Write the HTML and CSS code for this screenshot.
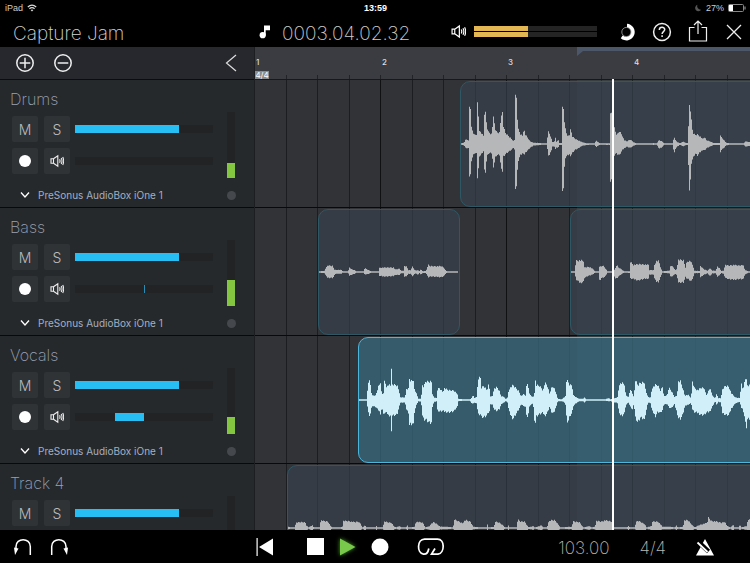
FILE: index.html
```html
<!DOCTYPE html>
<html lang="en">
<head>
  <meta charset="UTF-8">
  <meta name="viewport" content="width=device-width, initial-scale=1.0">
  <title>Capture Jam</title>
  <link rel="stylesheet" href="styles.css">
</head>
<body>
  <!-- shared icons -->
  <svg class="defs" aria-hidden="true">
    <symbol id="speaker" viewBox="0 0 14 14">
      <path d="M1 4.800h2.500v4.400H1zM3.500 4.800L7.800 1.800v10.400L3.500 9.200M9.600 5.200q.9 1.800 0 3.600M11.200 4q1.600 3 0 6M12.700 3q2 4 0 8" fill="none" stroke="currentColor" stroke-width="1.100"/>
    </symbol>
    <symbol id="chevron" viewBox="0 0 10 6">
      <path d="M1 .5l4 4.500 4-4.500" fill="none" stroke="currentColor" stroke-width="1.300"/>
    </symbol>
  </svg>

  <div class="status">
    <div class="status-left">
      <span>iPad</span>
      <svg width="10" height="8" viewBox="0 0 10 8"><path d="M.8 3q4.200-3.600 8.400 0M2.400 4.800q2.600-2.200 5.200 0" fill="none" stroke="#ddd" stroke-width="1.200"/><path d="M3.600 6q1.400-1.100 2.800 0L5 7.600z" fill="#ddd"/></svg>
    </div>
    <div class="clock">13:59</div>
    <div class="status-right">
      <svg width="7" height="8" viewBox="0 0 7 8"><path d="M2.500.8a3.300 3.300 0 1 0 3.700 5A3.600 3.600 0 0 1 2.500.8z" fill="#555"/></svg>
      <span>27%</span>
      <svg width="18" height="8" viewBox="0 0 18 8"><rect x=".5" y=".5" width="15" height="7" rx="1" fill="none" stroke="#888"/><path d="M1 1h4v6H1z" fill="#fff"/><path d="M16.500 2.500h1v3h-1z" fill="#aaa"/></svg>
    </div>
  </div>

  <header class="header">
    <h1 class="song">Capture Jam</h1>
    <svg class="note" width="12" height="14" viewBox="0 0 12 14"><path d="M5 .5h6v4.800H6.700v5H5z" fill="#fff"/><circle cx="3.700" cy="10.200" r="3.100" fill="#fff"/></svg>
    <div class="position">0003.04.02.32</div>
    <svg class="master-icon" width="15" height="15"><use href="#speaker"/></svg>
    <div class="master">
      <div class="master-bar"></div>
      <div class="master-bar"></div>
    </div>
    <div class="actions">
      <button aria-label="CPU load"><svg width="18" height="18" viewBox="0 0 18 18"><path d="M9 .8a8.300 8.300 0 1 1-6.200 14.400L4.600 12.400A4.600 4.600 0 1 0 9 4.500z" fill="#fff"/><circle cx="8.400" cy="9" r="4.600" fill="#000" stroke="#aaa" stroke-width=".8"/></svg></button>
      <button aria-label="Help"><svg width="20" height="20" viewBox="0 0 20 20" fill="none" stroke="#eee" stroke-width="1.500"><circle cx="10" cy="10" r="8.400"/><path d="M7.300 7.900c.1-3.500 5.400-3.400 5.400-.3 0 2-2.600 2.100-2.600 4.400M10.100 13.300v1.700"/></svg></button>
      <button aria-label="Share"><svg width="20" height="24" viewBox="0 0 20 24" fill="none" stroke="#eee" stroke-width="1.200"><path d="M6.500 7.500h-5V21h17V7.500h-5M10 14V1M6 5l4-4 4 4"/></svg></button>
      <button aria-label="Close"><svg width="20" height="20" viewBox="0 0 20 20"><path d="M3 3l14 14M17 3L3 17" stroke="#eee" stroke-width="1.300"/></svg></button>
    </div>
  </header>

  <main class="workspace">
    <section class="sidebar">
      <div class="track-tools">
        <button aria-label="Add track"><svg width="20" height="20" viewBox="0 0 20 20" fill="none" stroke="#eee" stroke-width="1.500"><circle cx="10" cy="10" r="8.200"/><path d="M10 4.700v10.600M4.700 10h10.600"/></svg></button>
        <button aria-label="Remove track"><svg width="20" height="20" viewBox="0 0 20 20" fill="none" stroke="#eee" stroke-width="1.500"><circle cx="10" cy="10" r="8.200"/><path d="M4.700 10h10.600"/></svg></button>
        <button class="collapse" aria-label="Collapse"><svg width="12" height="18" viewBox="0 0 12 18"><path d="M11 1L1.500 9l9.500 8" fill="none" stroke="#ddd" stroke-width="1.200"/></svg></button>
      </div>

      <div class="track">
        <h2>Drums</h2>
        <div class="controls">
          <button class="key">M</button>
          <button class="key">S</button>
          <input class="volume" type="range" value="75" aria-label="Drums volume">
          <button class="key" aria-label="Record"><span class="rec"></span></button>
          <button class="key" aria-label="Monitor"><svg width="14" height="14"><use href="#speaker"/></svg></button>
          <input class="pan" type="range" value="50" aria-label="Drums pan">
          <div class="level"><div style="height: 23%"></div></div>
        </div>
        <div class="device">
          <svg width="10" height="6"><use href="#chevron"/></svg>
          <span>PreSonus AudioBox iOne 1</span>
          <i class="led"></i>
        </div>
      </div>

      <div class="track">
        <h2>Bass</h2>
        <div class="controls">
          <button class="key">M</button>
          <button class="key">S</button>
          <input class="volume" type="range" value="75" aria-label="Bass volume">
          <button class="key" aria-label="Record"><span class="rec"></span></button>
          <button class="key" aria-label="Monitor"><svg width="14" height="14"><use href="#speaker"/></svg></button>
          <input class="pan pan-center" type="range" value="50" aria-label="Bass pan">
          <div class="level"><div style="height: 39%"></div></div>
        </div>
        <div class="device">
          <svg width="10" height="6"><use href="#chevron"/></svg>
          <span>PreSonus AudioBox iOne 1</span>
          <i class="led"></i>
        </div>
      </div>

      <div class="track">
        <h2>Vocals</h2>
        <div class="controls">
          <button class="key">M</button>
          <button class="key">S</button>
          <input class="volume" type="range" value="75" aria-label="Vocals volume">
          <button class="key" aria-label="Record"><span class="rec"></span></button>
          <button class="key" aria-label="Monitor"><svg width="14" height="14"><use href="#speaker"/></svg></button>
          <input class="pan pan-left" type="range" value="29" aria-label="Vocals pan">
          <div class="level"><div style="height: 26%"></div></div>
        </div>
        <div class="device">
          <svg width="10" height="6"><use href="#chevron"/></svg>
          <span>PreSonus AudioBox iOne 1</span>
          <i class="led"></i>
        </div>
      </div>

      <div class="track">
        <h2>Track 4</h2>
        <div class="controls">
          <button class="key">M</button>
          <button class="key">S</button>
          <input class="volume" type="range" value="75" aria-label="Track 4 volume">
          <div class="level"></div>
        </div>
      </div>
    </section>

    <section class="timeline">
      <div class="ruler">
        <span>1</span><span>2</span><span>3</span><span>4</span>
        <div class="signature">4/4</div>
        <div class="loop-range"></div>
      </div>
      <div class="lane"><div class="clip clip-drums"><svg class="wave" data-wave="drums"></svg></div></div>
      <div class="lane">
        <div class="clip clip-bass-a"><svg class="wave" data-wave="bassA"></svg></div>
        <div class="clip clip-bass-b"><svg class="wave" data-wave="bassB"></svg></div>
      </div>
      <div class="lane"><div class="clip clip-vocals selected"><svg class="wave" data-wave="vocals"></svg></div></div>
      <div class="lane"><div class="clip clip-track4"><svg class="wave" data-wave="track4"></svg></div></div>
      <div class="loop-shade"></div>
      <div class="playhead"></div>
    </section>
  </main>

  <footer class="transport">
    <div class="history">
      <button aria-label="Undo"><svg width="20" height="18" viewBox="0 0 20 18"><path d="M17.300 17V8.500c0-9-14.300-9-14.300 0V12" fill="none" stroke="#fff" stroke-width="1.500"/><path d="M1 9.500l4.500 1L2 17z" fill="#fff"/></svg></button>
      <button aria-label="Redo"><svg width="20" height="18" viewBox="0 0 20 18"><path d="M2.700 17V8.500c0-9 14.300-9 14.300 0V12" fill="none" stroke="#fff" stroke-width="1.500"/><path d="M19 9.500l-4.500 1L18 17z" fill="#fff"/></svg></button>
    </div>
    <div class="play-keys">
      <button class="rewind" aria-label="Back to start"><svg width="18" height="18" viewBox="0 0 18 18" fill="#fff"><path d="M.5 0h1.200v18H.5zM3 9l14-8.500v17z"/></svg></button>
      <button class="stop" aria-label="Stop"><svg width="17" height="17"><path d="M0 0h17v17H0z" fill="#fff"/></svg></button>
      <button class="play" aria-label="Play"><svg width="16" height="18" viewBox="0 0 16 18"><path d="M0 .5L15.500 9 0 17.500z" fill="#77c84b"/></svg></button>
      <button class="record" aria-label="Record"><svg width="18" height="18"><circle cx="9" cy="9" r="8.500" fill="#fff"/></svg></button>
      <button class="loop" aria-label="Loop"><svg width="28" height="18" viewBox="0 0 28 18" fill="none" stroke="#fff" stroke-width="1.700"><path d="M7.500 16.200h-1C-.5 15 0 1.200 7.500 1.200h13c7.500 0 7.500 13.500.5 15h-6.500L18 10.500M7 16.200c3 0 4.200-2 4.800-5.700"/></svg></button>
    </div>
    <div class="tempo">103.00</div>
    <div class="meter">4/4</div>
    <button class="metronome" aria-label="Metronome"><svg width="20" height="18" viewBox="0 0 20 18"><path d="M10 1l9 16.500H1z" fill="#fff"/><path d="M4 4.500L13.500 13.500" stroke="#000" stroke-width="4.500"/><path d="M2.500 4.500L12.500 14" stroke="#fff" stroke-width="1.800"/></svg></button>
  </footer>

  <script src="waves.js"></script>
</body>
</html>
```
FILE: styles.css
```css
* {
  box-sizing: border-box;
}

body {
  margin: 0;
  height: 100vh;
  display: flex;
  flex-direction: column;
  overflow: hidden;
  background: #000;
  color: #ccc;
  font-family: Inter, "Liberation Sans", sans-serif;
}

button {
  display: flex;
  align-items: center;
  justify-content: center;
  padding: 0;
  border: none;
  background: none;
  color: inherit;
  font: inherit;
  cursor: pointer;
}

h1, h2 {
  margin: 0;
  font-weight: 200;
}

.defs {
  display: none;
}

/* iPad status bar */
.status {
  display: grid;
  grid-template-columns: 1fr auto 1fr;
  align-items: center;
  height: 16px;
  padding: 0 4px 0 5px;
  font-family: "Liberation Sans", sans-serif;
  font-size: 9px;
}

.status-left,
.status-right {
  display: flex;
  align-items: center;
  gap: 4px;
}

.status-right {
  justify-content: flex-end;
}

.clock {
  color: #fff;
  font-weight: bold;
}

/* header */
.header {
  display: flex;
  align-items: center;
  flex: none;
  height: 31px;
  padding: 0 6px 0 13px;
}

.song {
  flex: none;
  width: 246px;
  padding-top: 4px;
  font-size: 19px;
  color: #d4d4d4;
}

.position {
  flex: none;
  width: 180px;
  padding: 4px 0 0 11px;
  font-size: 19px;
  font-weight: 200;
}

.note,
.master-icon,
.master {
  flex: none;
}

.master-icon {
  color: #fff;
}

.master {
  display: flex;
  flex-direction: column;
  gap: 1px;
  width: 123px;
  margin-left: 8px;
}

.master-bar {
  height: 5px;
  background: linear-gradient(to right, #e3b854 44%, #242424 44%);
}

.actions {
  display: flex;
  align-items: center;
  justify-content: flex-end;
  flex: 1;
  gap: 16px;
}

/* workspace */
.workspace {
  display: flex;
  flex: 1;
  min-height: 0;
  overflow: hidden;
}

.sidebar {
  flex: none;
  width: 255px;
  background: #26292c;
  border-right: 1px solid #1c1e21;
}

.track-tools {
  display: flex;
  align-items: center;
  gap: 18px;
  height: 33px;
  padding: 0 17px 0 15px;
  background: #27282d;
  border-bottom: 1px solid #0c0c0e;
}

.collapse {
  margin-left: auto;
}

.track {
  height: 128px;
  padding: 7px 18px 0 10px;
  border-bottom: 1px solid #08090a;
}

.track h2 {
  font-size: 16px;
  line-height: 24px;
  color: #9ba1b0;
}

.controls {
  display: grid;
  grid-template-columns: 26px 26px 138px 8px;
  grid-template-rows: 26px 26px;
  align-items: center;
  gap: 6px;
  padding: 5px 0 0 2px;
}

.key {
  width: 26px;
  height: 26px;
  border-radius: 2px;
  background: #303336;
  font-size: 14px;
  font-weight: 300;
  color: #b9bbbe;
}

.key svg {
  color: #eee;
}

.rec {
  width: 12px;
  height: 12px;
  border-radius: 50%;
  background: #fff;
}

input[type="range"] {
  appearance: none;
  width: 138px;
  height: 8px;
  margin: 0 0 0 -1px;
  background: #222325;
}

input[type="range"]::-webkit-slider-thumb {
  appearance: none;
  width: 8px;
  height: 8px;
}

input.volume {
  background: linear-gradient(to right, #27bef4 104px, #222325 104px);
}

input.pan-center {
  background: linear-gradient(to right, #222325 69px, #2b8db5 69px, #2b8db5 70px, #222325 70px);
}

input.pan-left {
  background: linear-gradient(to right, #222325 40px, #27bef4 40px, #27bef4 69px, #222325 69px);
}

.level {
  grid-column: 4;
  grid-row: 1 / 3;
  display: flex;
  align-items: flex-end;
  width: 8px;
  height: 66px;
  margin-left: 7px;
  background: #222325;
}

.level div {
  width: 8px;
  background: #84c63f;
}

.device {
  display: flex;
  align-items: center;
  height: 26px;
  padding: 0 0 0 10px;
  margin-top: 8px;
  font-size: 10px;
  color: #a3b0c4;
}

.device svg {
  margin-right: 8px;
  color: #fff;
}

.led {
  width: 9px;
  height: 9px;
  margin-left: auto;
  border-radius: 50%;
  background: #45484d;
}

/* timeline */
.timeline {
  position: relative;
  flex: 1;
  min-width: 0;
  overflow: hidden;
  background: #323337;
}

.ruler {
  position: relative;
  display: flex;
  height: 33px;
  border-bottom: 1px solid #17181a;
  background:
    repeating-linear-gradient(to right, transparent 0 31px, #222326 31px 32px, transparent 32px 62px, #222326 62px 63px) 0 100% / 100% 4px no-repeat,
    #3a3c41;
}

.ruler span {
  flex: none;
  width: 126px;
  padding: 10px 0 0 1px;
  font-size: 8px;
  font-weight: 500;
  color: #ddd;
}

.signature {
  position: absolute;
  left: 0;
  bottom: 0;
  width: 14px;
  background: #8a8b8d;
  color: #fff;
  font-size: 8px;
  line-height: 8px;
  text-align: center;
}

.loop-range {
  position: absolute;
  left: 322px;
  right: 0;
  top: 0;
  height: 9px;
  background: #4c586a;
  clip-path: polygon(0 0, 100% 0, 100% 4px, 6px 4px, 0 9px);
}

.lane {
  position: relative;
  height: 128px;
  border-bottom: 1px solid #08090a;
  background:
    repeating-linear-gradient(to right, transparent 0 125px, #101113 125px 126px),
    repeating-linear-gradient(to right, transparent 0 31px, #1c1d20 31px 32px, transparent 32px 62px, #1c1d20 62px 63px);
}

.clip {
  position: absolute;
  z-index: 1;
  top: 1px;
  height: 126px;
  overflow: hidden;
  border: 1px solid #2e5866;
  border-radius: 10px;
  background: rgba(57, 66, 80, .64);
  color: #b6b7b9;
}

.clip.selected {
  border-color: #4bb5dc;
  background: rgba(55, 102, 121, .8);
  color: #d0eff8;
}

.clip-drums { left: 205px; right: -12px; }
.clip-bass-a { left: 63px; width: 142px; }
.clip-bass-b { left: 315px; right: -12px; }
.clip-vocals { left: 103px; right: -12px; }
.clip-track4 { left: 32px; right: -12px; }

.wave {
  display: block;
  width: 100%;
  height: 100%;
}

/* sits under the clips */
.loop-shade {
  position: absolute;
  left: 322px;
  right: 0;
  top: 33px;
  bottom: 0;
  background: rgba(80, 120, 110, .18);
}

.playhead {
  position: absolute;
  z-index: 2;
  left: 357px;
  top: 32px;
  bottom: 0;
  width: 2px;
  background: #fff;
}

/* transport */
.transport {
  display: flex;
  align-items: center;
  flex: none;
  height: 33px;
  padding-right: 35px;
}

.history {
  display: flex;
  gap: 16px;
  width: 256px;
  padding-left: 13px;
}

.play-keys {
  display: flex;
  align-items: center;
}

.stop {
  margin-left: 33px;
}

.play {
  margin-left: 16px;
  filter: drop-shadow(0 0 2px #4c9a2c);
}

.record {
  margin-left: 15px;
}

.loop {
  margin-left: 28px;
}

.tempo {
  margin-left: auto;
  margin-right: 30px;
}

.tempo,
.meter {
  padding-top: 3px;
  font-size: 17px;
  font-weight: 200;
  color: #b8b8b8;
}

.metronome {
  margin-left: 29px;
}
```
FILE: waves.js
```js
// Envelope points: position, height above the axis, height below (3 units = 1px)
const WAVES = {
  drums: `3 2 2, 12 4 4, 16 14 12, 25 12 14, 27 40 30, 28 113 98, 32 113 98, 34 50 50, 42 28 28, 49 30 30, 50 125 100, 54 124 104, 56 50 50, 60 38 36, 70 25 22, 73 96 84, 77 94 84, 80 55 40, 85 38 30, 96 30 28, 98 80 68, 102 78 68, 104 50 45, 110 36 34, 120 36 34, 122 97 84, 127 97 84, 130 55 38, 135 35 32, 145 25 24, 155 15 18, 160 10 12, 164 14 20, 166 142 130, 169 142 130, 172 80 85, 175 45 50, 180 32 36, 188 25 28, 191 50 36, 195 30 28, 202 20 20, 210 8 12, 220 4 5, 240 3 3, 245 1 2, 261 2 2, 263 40 30, 267 34 36, 272 22 25, 277 6 8, 283 8 8, 286 20 16, 289 8 12, 295 12 10, 298 3 3, 305 3 3, 307 109 138, 311 109 138, 314 55 45, 320 30 38, 327 24 32, 332 47 36, 336 24 28, 345 16 18, 355 11 14, 365 6 6, 380 2 3, 404 2 2, 408 11 10, 416 4 4, 425 2 2, 448 2 3, 451 98 120, 456 112 120, 460 60 40, 465 40 30, 470 28 30, 478 40 35, 486 28 20, 492 12 14, 500 8 8, 510 14 12, 520 6 6, 530 2 2, 570 2 2, 580 3 3, 590 2 2, 597 12 14, 606 8 10, 612 2 2, 638 2 2, 642 24 32, 646 12 15, 652 6 8, 660 2 2, 668 7 7, 680 3 3, 684 3 3, 686 118 140, 690 118 142, 693 80 60, 698 35 45, 705 28 30, 712 30 36, 720 24 26, 728 15 18, 734 22 20, 738 12 14, 750 8 8, 760 3 3, 778 3 3, 782 35 34, 785 18 14, 790 14 14, 798 4 4, 815 1 2, 850 1 1, 856 8 8, 875 5 5`,
  bassA: `4 2 2, 20 4 4, 24 16 14, 29 20 18, 44 19 18, 48 8 14, 50 7 6, 70 6 5, 74 2 2, 90 2 2, 93 14 12, 101 8 8, 111 5 5, 114 2 2, 136 2 2, 140 12 8, 151 6 6, 161 2 2, 182 2 2, 184 13 12, 196 14 14, 226 14 13, 231 8 9, 244 10 9, 249 4 4, 256 4 4, 259 18 14, 264 18 13, 271 6 6, 278 5 5, 282 18 14, 286 12 10, 291 5 4, 300 5 8, 304 3 3, 308 8 8, 314 2 3, 324 4 4, 330 22 16, 336 18 14, 356 18 15, 371 18 16, 378 12 12, 384 3 3, 390 2 2, 420 1 1`,
  bassB: `5 1 1, 13 2 2, 18 36 24, 30 36 34, 40 34 30, 43 14 18, 55 16 12, 62 14 10, 70 8 6, 75 2 2, 86 2 2, 89 24 36, 93 16 18, 98 20 18, 105 12 14, 112 2 2, 130 2 2, 135 10 20, 140 22 20, 145 14 14, 155 8 6, 162 2 2, 178 2 3, 181 32 20, 190 22 22, 205 24 26, 220 24 22, 235 22 20, 238 6 8, 250 6 8, 253 22 20, 258 34 30, 266 34 30, 272 12 14, 276 2 2, 298 4 4, 302 22 16, 310 14 10, 316 6 6, 320 10 10, 324 38 32, 340 36 32, 346 14 16, 350 32 20, 356 34 24, 361 34 28, 368 20 20, 373 4 4, 388 3 3, 391 18 16, 402 8 8, 412 4 4, 420 12 14, 426 4 4, 438 4 4, 441 18 16, 448 12 10, 454 3 3, 460 4 6, 466 22 18, 475 20 22, 490 22 24, 505 20 22, 520 22 22, 524 6 8, 535 2 2, 545 2 2`,
  vocals: `3 1 1, 26 1 1, 28 28 20, 31 56 40, 34 57 46, 38 42 40, 41 14 18, 53 14 22, 57 30 28, 63 50 34, 67 48 42, 71 20 26, 76 20 40, 77 60 40, 81 60 44, 85 38 36, 90 50 50, 97 46 50, 98 90 90, 101 90 90, 102 48 48, 117 46 46, 123 28 22, 127 8 8, 141 8 8, 145 34 30, 151 36 40, 153 68 80, 159 60 76, 165 62 76, 169 34 40, 175 20 14, 181 4 4, 189 4 5, 192 46 44, 197 40 60, 203 58 60, 209 56 66, 215 58 72, 221 56 70, 223 20 24, 227 8 6, 235 6 4, 237 30 30, 243 38 36, 253 26 34, 259 36 36, 272 30 38, 287 30 36, 297 20 22, 301 4 4, 317 2 2, 335 2 2, 339 4 8, 345 16 12, 349 6 8, 357 12 12, 359 66 44, 367 68 44, 370 38 52, 377 44 54, 387 30 48, 390 50 40, 394 36 36, 396 10 12, 405 14 16, 407 36 30, 417 40 34, 425 26 28, 429 10 12, 435 12 10, 443 3 3, 449 8 8, 452 34 34, 459 40 50, 465 46 58, 472 38 46, 482 28 30, 489 12 14, 497 18 18, 502 14 22, 506 50 50, 510 50 56, 513 20 20, 525 8 10, 529 20 60, 532 60 70, 535 46 50, 545 44 44, 555 30 40, 560 52 50, 567 46 40, 574 20 22, 581 40 40, 587 42 42, 594 20 20, 599 4 4, 611 2 4, 617 8 6, 622 12 14, 625 58 50, 629 58 70, 635 46 50, 642 46 40, 645 16 20, 652 10 12, 662 4 4, 675 4 4, 680 8 8, 684 1 2, 737 1 2, 752 6 4, 757 2 3, 772 6 8, 780 10 10, 782 50 44, 792 52 48, 799 48 40, 803 14 16, 811 10 8, 817 34 22, 823 20 30, 827 8 10, 832 62 54, 839 46 70, 847 54 56, 857 56 60, 863 30 44, 869 10 8, 877 8 10, 882 38 34, 892 46 50, 899 46 36, 907 30 40, 914 42 30, 917 12 14, 927 14 12, 932 38 22, 939 30 26, 949 10 14, 957 14 40, 961 58 56, 967 58 58, 974 36 46, 980 14 20, 990 16 14, 999 6 10, 1003 58 30, 1009 38 38, 1019 30 40, 1029 38 46, 1039 36 46, 1044 14 40, 1055 36 36, 1065 10 16, 1071 6 4, 1076 20 16, 1080 6 6, 1089 6 8, 1092 32 40, 1102 44 46, 1112 42 48, 1120 20 26, 1132 8 10, 1144 6 6, 1150 50 24, 1155 30 30, 1161 68 60, 1164 68 94, 1167 46 60, 1180 46 58`,
  track4: `3 2 2, 5 6 6, 9 1 1, 23 2 2, 26 16 9, 40 18 9, 54 18 9, 58 8 8, 64 2 2, 76 8 8, 80 1 1, 98 2 2, 101 24 9, 110 22 9, 123 20 9, 128 10 9, 134 2 2, 158 2 2, 166 4 4, 168 22 9, 183 22 9, 203 18 9, 213 20 9, 220 14 9, 226 2 2, 234 8 8, 238 2 2, 265 1 1, 268 6 6, 272 1 1, 288 3 3, 290 20 9, 300 18 9, 313 16 9, 320 6 6, 326 2 2, 338 6 6, 343 1 1, 357 1 1, 360 10 9, 364 1 1, 383 4 4, 386 20 9, 398 18 9, 408 16 9, 414 2 2, 428 6 6, 433 14 9, 440 18 9, 450 12 9, 460 4 4, 480 4 4, 498 2 2, 502 26 9, 512 22 9, 528 14 9, 533 24 9, 538 24 9, 550 20 9, 558 4 4, 578 2 2, 598 2 2, 600 16 9, 603 2 2, 621 4 4, 624 20 9, 638 16 9, 648 8 8, 653 2 2, 661 2 2, 663 10 9, 667 2 2, 688 2 2, 692 26 9, 700 20 9, 713 20 9, 720 8 8, 725 2 2, 738 6 6, 743 2 2, 764 8 8, 768 2 2, 780 2 2, 784 20 9, 792 24 9, 803 24 9, 813 12 9, 820 2 2, 854 4 4, 858 20 9, 878 18 9, 885 6 6, 890 2 2, 908 6 6, 912 2 2, 924 4 4, 928 22 9, 943 20 9, 953 24 9, 973 20 9, 978 2 2, 1020 2 2, 1024 6 6, 1028 2 2, 1043 2 2, 1048 22 9, 1058 20 9, 1073 12 9, 1078 2 2, 1093 6 6, 1096 20 9, 1113 20 9, 1126 4 4, 1146 4 4, 1164 2 2, 1168 8 8, 1172 2 2, 1188 4 4, 1192 24 9, 1203 24 9, 1216 8 8, 1223 2 2, 1238 10 9, 1260 16 9, 1264 32 9, 1273 22 9, 1288 20 9, 1303 16 9, 1313 20 9, 1320 6 6, 1330 2 2, 1338 10 9, 1342 2 2, 1356 2 2, 1358 12 9, 1362 2 2, 1378 6 6, 1383 26 9, 1395 24 9`
};

const AXIS = 62;

function drawWave(svg) {
  const points = WAVES[svg.dataset.wave].split(',').map(p => p.trim().split(' ').map(Number));
  const end = points[points.length - 1][0];
  let d = '';
  let i = 0;

  // one bar per pixel column
  for (let px = 1; px * 3 < end; px++) {
    const x = Math.max(px * 3 + 1, points[0][0]);
    if (x >= end) break;
    while (points[i + 1][0] < x) i++;
    const [x0, up0, down0] = points[i];
    const [x1, up1, down1] = points[i + 1];
    const t = (x - x0) / (x1 - x0);
    // uneven columns, like samples
    const ripple = 1.04 - 0.16 * ((px * 37 % 11) / 10);
    const up = Math.max(2, (up0 + (up1 - up0) * t) * ripple) / 3;
    const down = Math.max(2, (down0 + (down1 - down0) * t) * ripple) / 3;
    d += `M${px - 1} ${AXIS - up}h1v${up + down}h-1z`;
  }

  const path = document.createElementNS('http://www.w3.org/2000/svg', 'path');
  path.setAttribute('d', d);
  path.setAttribute('fill', 'currentColor');
  svg.appendChild(path);
}

document.querySelectorAll('.wave').forEach(drawWave);
```
